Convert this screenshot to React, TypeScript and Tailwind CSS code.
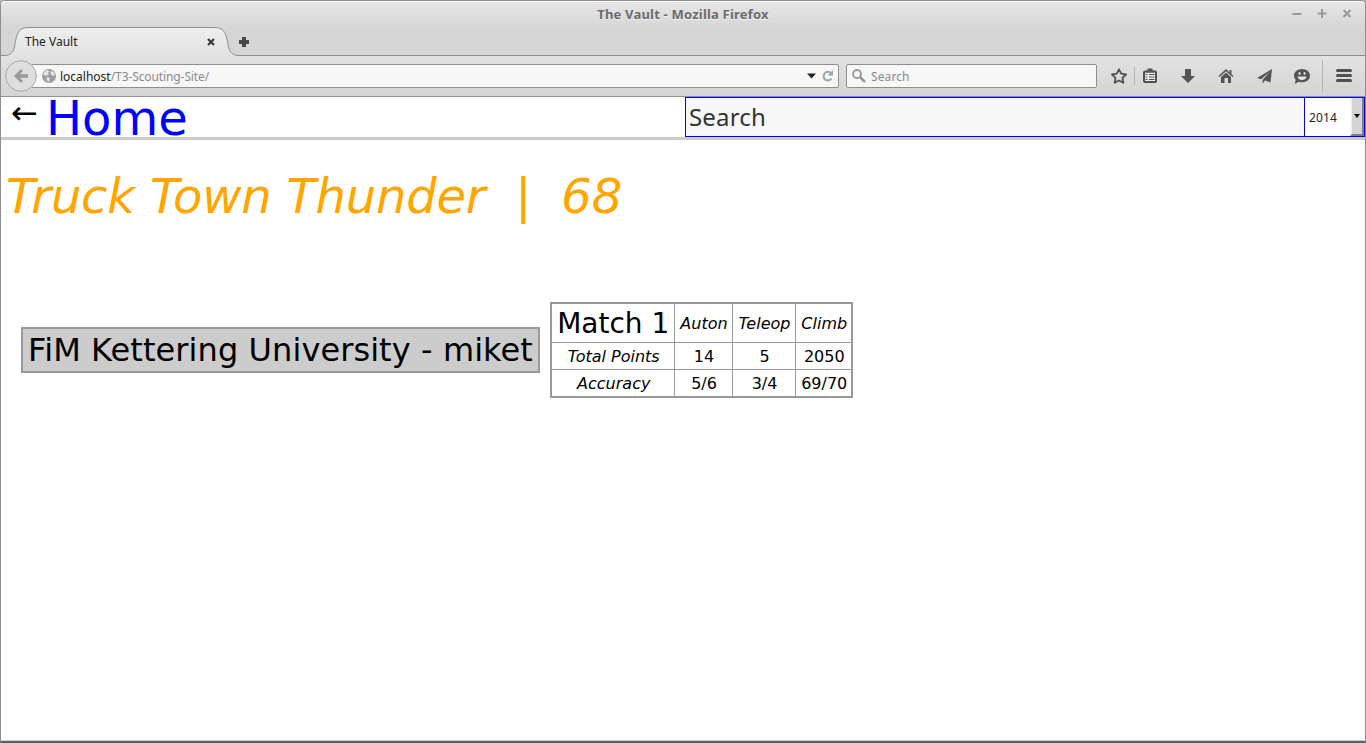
import React from "react";

function TabShape() {
  return (
    <svg width="240" height="29" viewBox="0 0 240 29" className="absolute left-0 top-0">
      <defs>
        <linearGradient id="tab" x1="0" y1="0" x2="0" y2="1">
          <stop offset="0" stopColor="#efefef" />
          <stop offset="1" stopColor="#e2e2e2" />
        </linearGradient>
      </defs>
      <path
        d="M0 28.5H3C9 28.5 12 26 13.5 20C15.500 8 16.500 .5 27 .5H214C224 .5 225.500 8 227.500 20C229 26 232 28.500 238 28.500H240V29H0Z"
        fill="url(#tab)"
      />
      <path
        d="M0 28.5H3C9 28.5 12 26 13.500 20C15.500 8 16.500 .5 27 .5H214C224 .5 225.500 8 227.500 20C229 26 232 28.500 238 28.500H240"
        fill="none"
        stroke="#8e8e8e"
      />
    </svg>
  );
}

function TabStrip() {
  return (
    <div className="relative flex h-[29px] items-start">
      <div className="absolute bottom-0 left-[238px] right-0 h-px bg-[#8e8e8e]" />
      <TabShape />
      <div className="relative flex h-[29px] w-[226px] items-center pl-6 pt-px text-[12px] text-[#222]">
        <span className="grow">The Vault</span>
        <svg width="8" height="8" viewBox="0 0 8 8" className="mr-[12px]">
          <path d="M1 1L7 7M7 1L1 7" stroke="#3a3a3a" strokeWidth="2.200" />
        </svg>
      </div>
      <svg width="10" height="10" viewBox="0 0 10 10" className="relative ml-[12px] mt-[10px]">
        <path d="M3 0H7V3H10V7H7V10H3V7H0V3H3Z" fill="#484848" />
      </svg>
    </div>
  );
}

function TitleBar() {
  return (
    <div className="flex h-[25px] items-center">
      <div className="w-[80px]" />
      <div className="grow text-center text-[13px] font-bold tracking-[0.2px] text-[#6b6b6b] [text-shadow:0_1px_0_#f2f2f2]">
        The Vault - Mozilla Firefox
      </div>
      <svg width="80" height="25" viewBox="0 0 80 25" stroke="#999" strokeWidth="2" fill="none">
        <path d="M7.500 12H16.500M32.500 11.500H41.500M37 7V16M58.500 8L65.500 15M65.500 8L58.500 15" />
      </svg>
    </div>
  );
}

function ToolbarIcons() {
  return (
    <svg width="268" height="40" viewBox="1097 56 268 40" fill="#555">
      <path
        d="M1119 69.300L1121.200 73.700L1126 74.500L1122.500 77.900L1123.300 82.800L1119 80.500L1114.700 82.800L1115.500 77.900L1112 74.500L1116.800 73.700Z"
        fill="none"
        stroke="#505050"
        strokeWidth="1.800"
        strokeLinejoin="round"
      />
      <path d="M1134.500 67V85M1322.500 60V92" stroke="#aab4be" />
      <rect x="1144" y="71.500" width="12" height="10.500" rx="1" fill="#eee" stroke="#505050" strokeWidth="2" />
      <path d="M1145.500 72.500V70.500H1147.500V68.500H1152.500V70.500H1154.500V72.500Z" />
      <path d="M1145.500 74.500H1147.500M1145.500 77H1147.500M1145.500 79.500H1147.500M1149 74.500H1154.500M1149 77H1154.500M1149 79.500H1154.500" stroke="#505050" strokeWidth="1.200" />
      <path d="M1185 69H1191V76H1195L1188 83L1181 76H1185Z" />
      <path d="M1226 69L1233.500 76L1232.500 77L1226 71.200L1219.500 77L1218.500 76ZM1229.500 70H1231.500V74L1229.500 72Z" />
      <path d="M1221 77L1226 72.600L1231 77V83H1228V78H1224.500V83H1221Z" />
      <path d="M1272 69L1257 78L1261.200 79.200L1269.500 71.800L1262.600 80V83.500L1265 80.600L1270.500 82.500Z" />
      <path d="M1302 69C1306.500 69 1310 71.800 1310 75.700C1310 79.600 1306.500 82.300 1302 82.300C1300.700 82.300 1299.500 82.100 1298.400 81.700C1297.500 82.800 1296 83.500 1294.300 83.500C1295.300 82.500 1295.700 81 1295.500 79.500C1294.600 78.400 1294 77.100 1294 75.700C1294 71.800 1297.500 69 1302 69Z" />
      <path d="M1297.500 76.500H1306.500C1306 79 1304.300 80 1302 80C1299.700 80 1298 79 1297.500 76.500Z" fill="#e5e5e5" />
      <ellipse cx="1299.500" cy="73.500" rx="1" ry="1.400" fill="#e5e5e5" />
      <ellipse cx="1304.500" cy="73.500" rx="1" ry="1.400" fill="#e5e5e5" />
      <path d="M1337.500 70.500H1350.500M1337.500 75.500H1350.500M1337.500 80.500H1350.500" stroke="#505050" strokeWidth="3" strokeLinecap="round" />
    </svg>
  );
}

function BackButton() {
  return (
    <svg width="32" height="32" viewBox="0 0 32 32" className="relative z-10 shrink-0">
      <circle cx="16" cy="16" r="15.300" fill="#dedede" stroke="#a3a9af" />
      <path d="M9 16L16 9L18 11L14.800 14.200H23V17.800H14.800L18 21L16 23Z" fill="#999" />
    </svg>
  );
}

function NavBar() {
  return (
    <div className="flex h-[41px] items-center border-b border-[#8e8e8e] bg-linear-to-b from-[#e2e2e2] to-[#d4d4d4] pl-[4px] text-[12px]">
      <BackButton />
      <div className="-ml-[6px] flex h-6 w-[808px] shrink-0 items-center rounded-[2px] border border-[#8e8e8e] bg-[#f7f7f7] pl-[10px]">
        <svg width="14" height="14" viewBox="0 0 14 14">
          <circle cx="7" cy="7" r="7" fill="#9c9c9c" />
          <path d="M2 3L5 1L7.500 2L6 4L7 5.500L4 7L1 5.500ZM9 2L12 3L13 6L11 7L8.500 5ZM5 8L8 9L7 13L4.500 11Z" fill="#e4e4e4" />
        </svg>
        <div className="ml-1 grow pt-px text-[#222]">
          localhost<span className="tracking-[-0.1px] text-[#8b8b8b]">/T3-Scouting-Site/</span>
        </div>
        <svg width="32" height="16" viewBox="806 68 32 16">
          <path d="M807 73.500H816L811.500 78.500Z" fill="#222" />
          <path d="M831 73.200A4.300 4.300 0 1 0 831.500 78.500" fill="none" stroke="#98a4ae" strokeWidth="2" />
          <path d="M833 70V75.500H827.500Z" fill="#98a4ae" />
        </svg>
      </div>
      <div className="ml-[7px] flex h-6 w-[251px] shrink-0 items-center rounded-[2px] border border-[#8e8e8e] bg-[#f7f7f7] pl-[5px] text-[#8b8b8b]">
        <svg width="14" height="14" viewBox="0 0 14 14" fill="none" stroke="#999">
          <circle cx="5" cy="5" r="4" strokeWidth="1.800" />
          <path d="M8 8L13 13" strokeWidth="2.500" />
        </svg>
        <span className="ml-[5px] pt-px tracking-[0.1px]">Search</span>
      </div>
      <ToolbarIcons />
    </div>
  );
}

function PageHeader() {
  return (
    <header className="flex h-[43px] border-b-[3px] border-[#cbcbcb]">
      <div className="flex h-10 w-[684px] pl-[10px]">
        <span className="w-[35px] text-[32px] leading-[32px]">←</span>
        <a className="text-[48px] leading-[42px] text-[#0000ff]">Home</a>
      </div>
      <div className="flex h-10 w-[620px] items-center border border-[#0000ff] bg-[#f7f7f7] pl-[3px] font-['Noto_Sans'] text-[24px] tracking-[0.15px] text-[#333]">
        Search
      </div>
      <div className="flex h-10 w-[60px] items-center border border-l-0 border-[#0000ff] pl-1 font-['Noto_Sans'] text-[12px] text-[#222]">
        <span className="grow pt-px tracking-[0.1px]">2014</span>
        <span className="flex h-[38px] w-[14px] items-center justify-center border-b-2 border-l-2 border-r-2 border-b-[#808080] border-l-[#f2f2f2] border-r-[#808080] bg-[#d4d4d4]">
          <svg width="6" height="4" viewBox="0 0 6 4">
            <path d="M0 0H6L3 4Z" />
          </svg>
        </span>
      </div>
    </header>
  );
}

const rows = [
  { label: "Total Points", values: ["14", "5", "2050"] },
  { label: "Accuracy", values: ["5/6", "3/4", "69/70"] },
];

function MatchTable() {
  return (
    <table className="h-[96px] w-[303px] table-fixed border-collapse border-2 border-[#999] text-center text-[16px] leading-[19px]">
      <colgroup>
        <col className="w-[123px]" />
        <col className="w-[58px]" />
        <col className="w-[63px]" />
        <col className="w-[57px]" />
      </colgroup>
      <tbody>
        <tr className="h-[39px]">
          <td className="border border-[#999] p-0 pl-px pt-[2px] text-[28px] leading-[33px]">Match 1</td>
          {["Auton", "Teleop", "Climb"].map((h) => (
            <td key={h} className="border border-[#999] p-0 pl-[2px] pt-[2px] italic">{h}</td>
          ))}
        </tr>
        {rows.map((r) => (
          <tr key={r.label} className="h-[27px]">
            <td className="border border-[#999] p-0 pl-[2px] italic">{r.label}</td>
            {r.values.map((v) => (
              <td key={v} className="border border-[#999] p-0 pl-[2px]">{v}</td>
            ))}
          </tr>
        ))}
      </tbody>
    </table>
  );
}

export default function App() {
  return (
    <div className="flex h-[743px] w-[1366px] flex-col overflow-hidden bg-[#b5b5b5]">
      <div className="flex h-[743px] flex-col rounded-t-[5px] border border-b-2 border-[#8e8e8e] border-b-[#5f5f5f] bg-[#d5d5d5]">
        <div className="rounded-t-[4px] border-t border-white bg-linear-to-b from-[#e6e6e6] to-[#d5d5d5] to-50% font-['Noto_Sans']">
          <TitleBar />
          <TabStrip />
        </div>
        <div className="font-['Noto_Sans']">
          <NavBar />
        </div>
        <div className="flex grow flex-col border-b border-[#d0d0d0] bg-white font-['DejaVu_Sans'] text-black">
          <PageHeader />
          <h1 className="mt-[28px] whitespace-pre pl-[5px] text-[48px] leading-[56px] tracking-[-0.22px] text-[#ffa500] italic">{"Truck Town Thunder  |  68"}</h1>
          <div className="mt-[78px] flex items-center pl-5">
            <div className="flex h-[46px] w-[519px] items-center justify-center whitespace-nowrap border-2 border-[#999] bg-[#ccc] text-[32px] tracking-[0.08px]">
              FiM Kettering University - miket
            </div>
            <div className="ml-[10px]">
              <MatchTable />
            </div>
          </div>
        </div>
      </div>
    </div>
  );
}
